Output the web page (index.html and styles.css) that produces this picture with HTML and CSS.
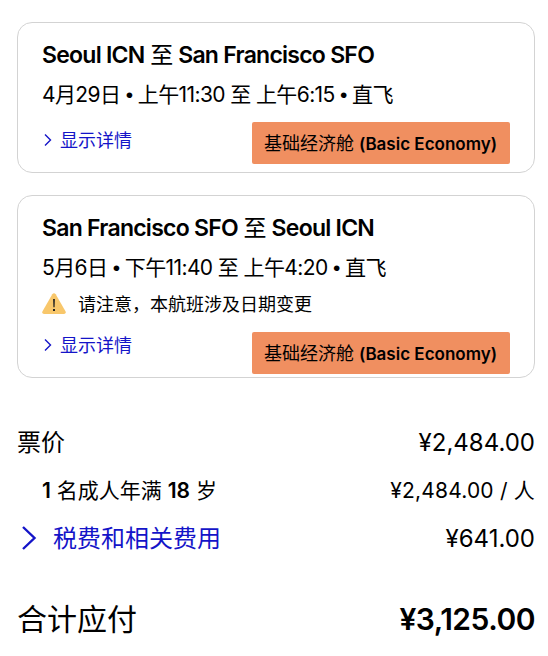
FILE: index.html
```html
<!DOCTYPE html>
<html lang="zh-CN">
<head>
    <meta charset="UTF-8">
    <meta name="viewport" content="width=device-width, initial-scale=1.0">
    <title>行程与票价</title>
    <link rel="stylesheet" href="styles.css">
</head>
<body>
    <div class="container">
        <div class="flight">
            <h2><b>Seoul ICN</b> 至 <b>San Francisco SFO</b></h2>
            <p class="times">4月29日 <i>•</i> 上午11:30 至 上午6:15 <i>•</i> 直飞</p>
            <div class="flight-footer">
                <a class="details">
                    <svg width="8" height="14" viewBox="0 0 8 14"><path d="M1 1.5 6.5 7 1 12.5"/></svg>
                    <span>显示详情</span>
                </a>
                <span class="fare">基础经济舱 <b>(Basic Economy)</b></span>
            </div>
        </div>

        <div class="flight with-notice">
            <h2><b>San Francisco SFO</b> 至 <b>Seoul ICN</b></h2>
            <p class="times">5月6日 <i>•</i> 下午11:40 至 上午4:20 <i>•</i> 直飞</p>
            <div class="notice">
                <svg width="24" height="21" viewBox="0 0 24 21">
                    <path class="triangle" d="M10.3 1.2Q12-.8 13.7 1.2L23.6 18.4Q24.2 20.8 22 21H2Q-.2 20.8.4 18.4Z"/>
                    <path class="mark" d="M11.1 6h1.8l-.3 8.2h-1.2zM11 16h2v2h-2z"/>
                </svg>
                <span>请注意，本航班涉及日期变更</span>
            </div>
            <div class="flight-footer">
                <a class="details">
                    <svg width="8" height="14" viewBox="0 0 8 14"><path d="M1 1.5 6.5 7 1 12.5"/></svg>
                    <span>显示详情</span>
                </a>
                <span class="fare">基础经济舱 <b>(Basic Economy)</b></span>
            </div>
        </div>

        <div class="summary">
            <div class="row">
                <span class="label">票价</span>
                <span class="amount">¥2,484.00</span>
            </div>
            <div class="row passenger">
                <span class="label"><b>1</b> 名成人年满 <b>18</b> 岁</span>
                <span class="amount">¥2,484.00 / 人</span>
            </div>
            <div class="row">
                <a class="taxes">
                    <svg width="16" height="26" viewBox="0 0 16 26"><path d="M2 2 13.5 13 2 24"/></svg>
                    <span class="label">税费和相关费用</span>
                </a>
                <span class="amount">¥641.00</span>
            </div>
            <div class="row total">
                <span class="label">合计应付</span>
                <span class="amount">¥3,125.00</span>
            </div>
        </div>
    </div>
</body>
</html>
```
FILE: styles.css
```css
* {
    box-sizing: border-box;
}
body {
    margin: 0;
    background-color: #fff;
    color: #000;
    font-family: Inter, "Noto Sans CJK SC", sans-serif;
}
h2, p {
    margin: 0;
    font-weight: 400;
}
b {
    font-weight: 600;
}
svg {
    display: block;
    flex: none;
}
.container {
    padding: 22px 13px 0 17px;
}
.flight {
    border: 1px solid #d3d3d3;
    border-radius: 15px;
    padding: 15px 24px 8px;
    margin-bottom: 22px;
}
.with-notice {
    padding-bottom: 3px;
}
.flight h2 {
    font-size: 23px;
    line-height: 34px;
    letter-spacing: -0.75px;
    white-space: nowrap;
}
.times {
    font-size: 21px;
    line-height: 30px;
    margin-top: 8px;
    letter-spacing: -0.6px;
    white-space: nowrap;
}
.times i {
    font-family: "Liberation Sans", sans-serif;
    font-style: normal;
}
.notice {
    display: flex;
    align-items: center;
    gap: 12px;
    height: 28px;
    margin-top: 6px;
    font-size: 18px;
}
.notice .triangle {
    fill: #f8c76b;
}
.notice .mark {
    fill: #222;
}
.flight-footer {
    display: flex;
    justify-content: space-between;
    margin-top: 12px;
}
.notice + .flight-footer {
    margin-top: 15px;
}
.details {
    display: flex;
    align-items: center;
    gap: 8px;
    height: 36px;
    padding-left: 2px;
    color: #1414c8;
    font-size: 18px;
}
.details span {
    padding-bottom: 3px;
}
.with-notice .details {
    height: 26px;
}
.details svg, .taxes svg {
    fill: none;
    stroke: #1414c8;
    stroke-width: 1.4;
}
.fare {
    width: 258px;
    height: 42px;
    padding-left: 12px;
    border-radius: 2px;
    background-color: #f08f60;
    font-size: 18px;
    line-height: 43px;
    white-space: nowrap;
}
.fare b {
    font-size: 17px;
}
.summary {
    padding-top: 18px;
}
.row {
    display: flex;
    justify-content: space-between;
    align-items: center;
    height: 48px;
    font-size: 24px;
    white-space: nowrap;
}
.label {
    padding-bottom: 3px;
}
.passenger {
    padding-left: 25px;
    font-size: 21px;
}
.passenger .amount {
    padding-bottom: 2px;
    letter-spacing: 0.2px;
}
.taxes {
    display: flex;
    align-items: center;
    gap: 16px;
    padding-left: 4px;
    color: #1414c8;
}
.taxes svg {
    stroke-width: 2.4;
}
.total {
    height: 60px;
    margin-top: 26px;
    font-size: 30px;
}
.total .amount {
    padding-top: 2px;
    font-weight: 600;
    letter-spacing: -0.5px;
}
```
